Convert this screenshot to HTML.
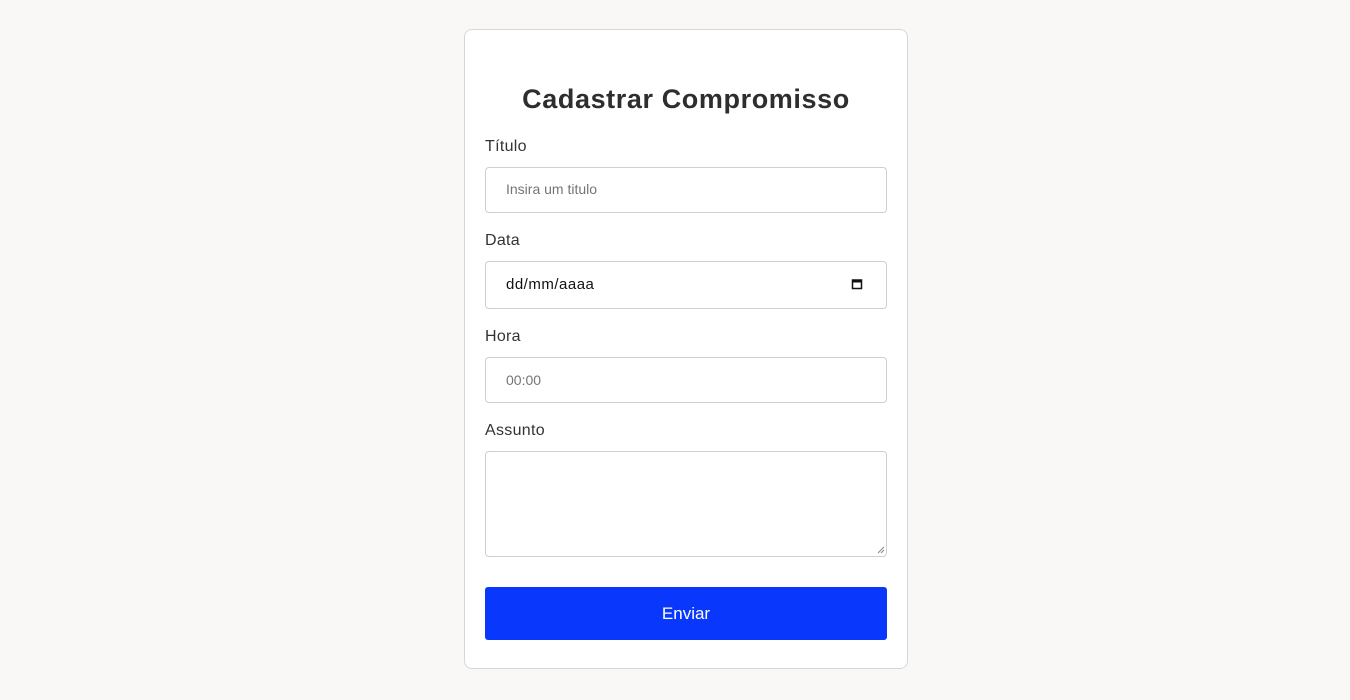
<!DOCTYPE html>
<html><head><meta charset="utf-8"><style>
body{margin:0;width:1350px;height:700px;background:#f9f8f7;font-family:"Liberation Sans",sans-serif;position:relative;overflow:hidden}
.card{position:absolute;left:464px;top:29px;width:442px;height:638px;background:#fff;border:1px solid #d6d6d6;border-radius:8px}
.a{position:absolute}
h1{position:absolute;left:464px;width:444px;top:84px;margin:0;text-align:center;font-size:27px;letter-spacing:0.6px;font-weight:bold;color:#2e2e2e}
.l{position:absolute;left:485px;font-size:16px;color:#333;letter-spacing:0.3px}
.i{position:absolute;left:485px;width:400px;border:1px solid #cfcfcf;border-radius:4px;background:#fff}
.p{position:absolute;left:506px;font-size:14px;color:#757575}
.btn{position:absolute;left:485px;top:587px;width:402px;height:53px;background:#0a37fc;border-radius:3px;color:#fff;font-size:17px;text-align:center;line-height:53px}
</style></head><body>
<div class="card"></div>
<h1>Cadastrar Compromisso</h1>
<div class="l" style="top:138px">Título</div>
<div class="i" style="top:167px;height:44px"></div>
<div class="p" style="top:181px">Insira um titulo</div>
<div class="l" style="top:232px">Data</div>
<div class="i" style="top:261px;height:46px"></div>
<div class="p" style="top:276px;color:#111;font-size:15px;letter-spacing:0.5px">dd/mm/aaaa</div>
<svg class="a" style="left:851px;top:278px" width="12" height="12" viewBox="0 0 12 12"><rect x="1.5" y="2" width="9" height="8.5" fill="none" stroke="#111" stroke-width="1.5"/><rect x="1.5" y="2" width="9" height="2.5" fill="#111"/></svg>
<div class="l" style="top:328px">Hora</div>
<div class="i" style="top:357px;height:44px"></div>
<div class="p" style="top:372px">00:00</div>
<div class="l" style="top:422px">Assunto</div>
<div class="i" style="top:451px;height:104px"></div>
<svg class="a" style="left:877px;top:546px" width="8" height="8"><path d="M1 7L7 1M4 7L7 4" stroke="#888" stroke-width="1"/></svg>
<div class="btn">Enviar</div>
</body></html>
